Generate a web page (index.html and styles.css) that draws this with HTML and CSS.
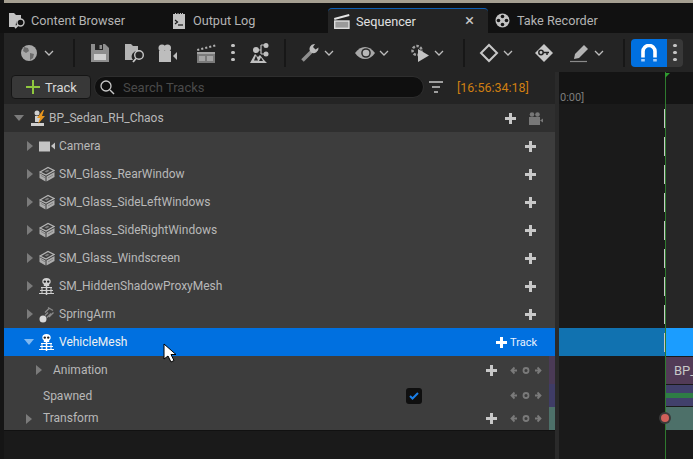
FILE: index.html
```html
<!DOCTYPE html>
<html lang="en">
<head>
	<meta charset="UTF-8">
	<title>Sequencer</title>
	<link rel="stylesheet" href="styles.css">
</head>
<body>
	<svg class="defs" width="0" height="0">
		<symbol id="chev" viewBox="0 0 10 6"><path d="M1 1l4 4 4-4" fill="none" stroke="#bdbdbd" stroke-width="1.3"/></symbol>
		<symbol id="plus" viewBox="0 0 11 11"><path d="M4 0h3v4h4v3H7v4H4V7H0V4h4z" fill="currentColor"/></symbol>
		<symbol id="cube" viewBox="0 0 16 16"><path d="M1 6L9 1.500 15 4.500 7 9z" fill="none" stroke="#b4b4b4" stroke-width="1.300"/><path d="M5.500 5.500l3-1.700 2 1-3 1.700z" fill="#7c7c7c"/><path d="M.500 7l6 3.500v5l-6-3.500zM7.500 10.500l8-4.500v5l-8 4.500z" fill="#adadad"/><path d="M2 9.500l4 2.300M9 12l5-3" stroke="#777" stroke-width=".8"/></symbol>
		<symbol id="skel" viewBox="0 0 15 17"><path d="M7.500 0c2.800 0 4.200 1.500 4.200 3.500 0 1.300-.6 2.200-1.500 2.700V8H4.800V6.200C3.900 5.700 3.300 4.800 3.300 3.500 3.300 1.500 4.700 0 7.500 0z" fill="currentColor"/><circle cx="5.800" cy="3.600" r="1.200" fill="#222"/><circle cx="9.200" cy="3.600" r="1.200" fill="#222"/><path d="M2 9.500h11M1 12.500h13M0 15.500h15" stroke="currentColor" stroke-width="1" fill="none"/><path d="M3 9v7M12 9v7" stroke="currentColor" stroke-width="1" fill="none"/><path d="M7.500 8v9" stroke="currentColor" stroke-width="1.500" fill="none"/></symbol>
		<symbol id="keys" viewBox="0 0 32 9"><g fill="none" stroke="#7a7a7a" stroke-width="1.800"><path d="M7 4.500H2M4.500 1.500l-3 3 3 3"/><circle cx="16" cy="4.500" r="2.500"/><path d="M25 4.500h5M27.500 1.500l3 3-3 3"/></g></symbol>
	</svg>

	<div class="strip"></div>

	<div class="tabs">
		<div class="tab tab-content">
			<svg class="tab-icon" width="18" height="18" viewBox="0 0 18 18"><path d="M0 1h5l2 2h5v4a6 6 0 0 0-5 8H0z" fill="#c2c2c2"/><circle cx="11.500" cy="10.500" r="3.500" fill="none" stroke="#c2c2c2" stroke-width="1.400"/><path d="M9 13l-3 3" stroke="#c2c2c2" stroke-width="1.800"/></svg>
			<span>Content Browser</span>
		</div>
		<div class="tab tab-log">
			<svg class="tab-icon" width="12" height="16" viewBox="0 0 12 16"><path d="M0 1h2V0h1v1h1.500V0h1v1H7V0h1v1h1V0h1v1h2v15H0z" fill="#c2c2c2"/><path d="M2 7l2.500 2L2 11" fill="none" stroke="#151515" stroke-width="1.200"/><path d="M5 12h5" stroke="#151515" stroke-width="1.200"/></svg>
			<span>Output Log</span>
		</div>
		<div class="tab tab-active">
			<svg class="tab-icon" width="16" height="16" viewBox="0 0 16 16"><path d="M0 5l15-4 .5 2L.5 7z" fill="#e4e4e4"/><rect x=".700" y="8" width="14.300" height="7.300" fill="#9a9a9a" stroke="#e4e4e4" stroke-width="1.300"/></svg>
			<span>Sequencer</span>
			<span class="tab-close">×</span>
		</div>
		<div class="tab tab-take">
			<svg class="tab-icon" width="16" height="16" viewBox="0 0 16 16"><circle cx="7.500" cy="7.500" r="7" fill="#c2c2c2"/><g fill="#151515"><circle cx="7.500" cy="3.500" r="1.800"/><circle cx="7.500" cy="11.500" r="1.800"/><circle cx="3.500" cy="7.500" r="1.800"/><circle cx="11.500" cy="7.500" r="1.800"/></g></svg>
			<span>Take Recorder</span>
		</div>
	</div>

	<div class="toolbar">
		<svg class="ml-21" width="16" height="16" viewBox="0 0 16 16"><circle cx="8" cy="8" r="8" fill="#a8a8a8"/><path d="M3 2l4 1 1 3-3 2-3-2zM9 8l4 1-1 4-3 2z" fill="#6c6c6c"/></svg>
		<svg class="ml-7" width="10" height="6"><use href="#chev"/></svg>
		<div class="sep ml-19"></div>
		<svg class="ml-16" width="18" height="18" viewBox="0 0 18 18"><path d="M0 0h14l4 4v14H0z" fill="#8e8e8e"/><path d="M4 0h8v6H4z" fill="#242424"/><path d="M8.500 1h2.500v4H8.500z" fill="#8e8e8e"/><path d="M3 10h12v6H3z" fill="#d0d0d0"/></svg>
		<svg class="ml-16" width="20" height="20" viewBox="0 0 20 20"><path d="M0 1h6l2 2h5v5a5.500 5.500 0 0 0-5 9H0z" fill="#b4b4b4"/><circle cx="14" cy="12" r="4.300" fill="none" stroke="#c8c8c8" stroke-width="1.400"/><path d="M11 15.500L8 19" stroke="#c8c8c8" stroke-width="1.800"/></svg>
		<svg class="ml-13" width="20" height="18" viewBox="0 0 20 18"><circle cx="4" cy="4" r="3.500" fill="#bdbdbd"/><circle cx="9.500" cy="4" r="3.500" fill="#bdbdbd"/><path d="M1 7h12v11H1z" fill="#bdbdbd"/><path d="M19 8v8l-4-4z" fill="#bdbdbd"/></svg>
		<svg class="ml-18" width="20" height="20" viewBox="0 0 20 20"><path d="M1 6l2-.5.5 2-2 .5zM5 5l2-.5.5 2-2 .5zM9 4l2-.5.5 2-2 .5zM13 3l2-.5.5 2-2 .5zM17 2l2-.5.5 2-2 .5z" fill="#b0b0b0"/><path d="M1 9h18v11H1z" fill="#7a7a7a"/><path d="M1 9h18v2H1zM3 13h6v5H3zM11 13h6v5h-6z" fill="#a4a4a4"/></svg>
		<div class="dots ml-15"><i></i><i></i><i></i></div>
		<svg class="ml-15" width="20" height="20" viewBox="0 0 20 20"><path d="M0 20l5-9 3 3 2-2 4 5 3 3z" fill="#c0c0c0"/><path d="M6 12.500l-2 5h4zM11 14.500l-2 3.500h4z" fill="#242424"/><circle cx="6" cy="7" r="3" fill="#c0c0c0"/><path d="M6 7h5M11 2v9M11 2h3M11 11h3" stroke="#c0c0c0" stroke-width="1.200" fill="none"/><circle cx="16" cy="2.500" r="2.500" fill="#c0c0c0"/><circle cx="16" cy="11" r="2.500" fill="#c0c0c0"/></svg>
		<div class="sep ml-14"></div>
		<svg class="ml-14" width="20" height="20" viewBox="0 0 20 20"><path d="M2.500 17.500L12 8" stroke="#8e8e8e" stroke-width="3.500"/><path d="M11 9.500a5 5 0 0 1 4-8.500l-2 3 2.500 2.500 3-2a5 5 0 0 1-7.500 5z" fill="#bcbcbc"/></svg>
		<svg class="ml-4" width="10" height="6"><use href="#chev"/></svg>
		<svg class="ml-21" width="20" height="14" viewBox="0 0 20 14"><path d="M0 7c3-4 6-6 10-6s7 2 10 6c-3 4-6 6-10 6S3 11 0 7z" fill="#a8a8a8"/><circle cx="11" cy="7" r="4.800" fill="#2a2a2a"/><circle cx="11" cy="7" r="3.300" fill="#b8b8b8"/></svg>
		<svg class="ml-4" width="10" height="6"><use href="#chev"/></svg>
		<svg class="ml-21" width="20" height="18" viewBox="0 0 20 18"><circle cx="7" cy="6.500" r="4.500" fill="none" stroke="#a0a0a0" stroke-width="2.500" stroke-dasharray="2.500 1.500"/><path d="M8 5v13l11-6.500z" fill="#c4c4c4"/></svg>
		<svg class="ml-4" width="10" height="6"><use href="#chev"/></svg>
		<div class="sep ml-19"></div>
		<svg class="ml-14" width="20" height="20" viewBox="0 0 20 20"><path d="M10 2l8 8-8 8-8-8z" fill="none" stroke="#c8c8c8" stroke-width="2"/></svg>
		<svg class="ml-4" width="10" height="6"><use href="#chev"/></svg>
		<svg class="ml-21" width="20" height="20" viewBox="0 0 20 20"><path d="M10 1l9 9-9 9-9-9z" fill="#c8c8c8"/><circle cx="7" cy="9.500" r="2.200" fill="none" stroke="#242424" stroke-width="1.500"/><path d="M9 9.500h6M13 9.500v2.500" stroke="#242424" stroke-width="1.500"/></svg>
		<svg class="ml-16" width="20" height="20" viewBox="0 0 20 20"><path d="M5 11L14 2l4 4-9 9-5 1z" fill="#b4b4b4"/><path d="M0 18.500h17" stroke="#8a8a8a" stroke-width="1.200"/></svg>
		<svg class="ml-4" width="10" height="6"><use href="#chev"/></svg>
		<div class="sep ml-19"></div>
		<div class="snap ml-6">
			<div class="snap-main">
				<svg width="16" height="18" viewBox="0 0 16 18"><path d="M2 12V7.500a6 6 0 0 1 12 0V12" fill="none" stroke="#fff" stroke-width="3.600"/><path d="M.200 12h3.600v1.500H.200zM12.200 12h3.600v1.500h-3.600z" fill="#fff"/><path d="M.200 15h3.600v2.500H.200zM12.200 15h3.600v2.500h-3.600z" fill="#a9d0fa"/></svg>
			</div>
			<div class="snap-more"><div class="dots"><i></i><i></i><i></i></div></div>
		</div>
	</div>

	<div class="main">
		<div class="left">
			<div class="trackbar">
				<div class="add-track">
					<svg width="14" height="14" viewBox="0 0 14 14"><path d="M6 0h2v6h6v2H8v6H6V8H0V6h6z" fill="#8fc73e"/></svg>
					<span>Track</span>
				</div>
				<div class="search">
					<svg width="15" height="15" viewBox="0 0 15 15"><circle cx="6" cy="6" r="5" fill="none" stroke="#c8c8c8" stroke-width="1.300"/><path d="M10 10l4 4" stroke="#c8c8c8" stroke-width="1.500"/></svg>
					<span>Search Tracks</span>
				</div>
				<svg class="filter" width="14" height="12" viewBox="0 0 14 12"><path d="M0 1h14M3 6h8M5 11h4" stroke="#c8c8c8" stroke-width="1.700"/></svg>
				<span class="timecode">[16:56:34:18]</span>
			</div>

			<div class="tree">
				<div class="row row-root">
					<i class="arrow-down"></i>
					<svg class="root-icon" width="15" height="17" viewBox="0 0 15 17"><circle cx="6" cy="3" r="2.500" fill="#cfcfcf"/><path d="M4 6h5v6H4z" fill="#cfcfcf"/><path d="M0 13h13v3H0z" fill="#cfcfcf"/><path d="M12 0L6 8h3l-2 6 7-8h-3l2-6z" fill="#e8961e"/></svg>
					<span class="label">BP_Sedan_RH_Chaos</span>
					<svg class="act-root" width="11" height="11"><use href="#plus"/></svg>
					<svg class="act-cam" width="14" height="13" viewBox="0 0 14 13"><circle cx="3" cy="2.500" r="2.300" fill="#777"/><circle cx="8.500" cy="2.500" r="2.300" fill="#777"/><path d="M0 5h11v8H0z" fill="#777"/><path d="M14 6.500v4l-3-2z" fill="#777"/></svg>
				</div>
				<div class="row">
					<i class="arrow"></i>
					<svg class="icon" width="16" height="12" viewBox="0 0 16 12"><path d="M0 1.500h11v10H0z" fill="#c4c4c4"/><path d="M16 2.500v7l-4-3.500z" fill="#c4c4c4"/></svg>
					<span class="label">Camera</span>
					<svg class="act" width="11" height="11"><use href="#plus"/></svg>
				</div>
				<div class="row">
					<i class="arrow"></i>
					<svg class="icon" width="16" height="16"><use href="#cube"/></svg>
					<span class="label">SM_Glass_RearWindow</span>
					<svg class="act" width="11" height="11"><use href="#plus"/></svg>
				</div>
				<div class="row">
					<i class="arrow"></i>
					<svg class="icon" width="16" height="16"><use href="#cube"/></svg>
					<span class="label">SM_Glass_SideLeftWindows</span>
					<svg class="act" width="11" height="11"><use href="#plus"/></svg>
				</div>
				<div class="row">
					<i class="arrow"></i>
					<svg class="icon" width="16" height="16"><use href="#cube"/></svg>
					<span class="label">SM_Glass_SideRightWindows</span>
					<svg class="act" width="11" height="11"><use href="#plus"/></svg>
				</div>
				<div class="row">
					<i class="arrow"></i>
					<svg class="icon" width="16" height="16"><use href="#cube"/></svg>
					<span class="label">SM_Glass_Windscreen</span>
					<svg class="act" width="11" height="11"><use href="#plus"/></svg>
				</div>
				<div class="row">
					<i class="arrow"></i>
					<svg class="icon skel" width="15" height="17"><use href="#skel"/></svg>
					<span class="label">SM_HiddenShadowProxyMesh</span>
					<svg class="act" width="11" height="11"><use href="#plus"/></svg>
				</div>
				<div class="row">
					<i class="arrow"></i>
					<svg class="icon" width="16" height="17" viewBox="0 0 16 17"><circle cx="4" cy="13" r="3.500" fill="#d8d8d8"/><path d="M6 9.500l3-3M8 11.500l4-4M6 6.500l4-4M10 11l4.500-4.500M9 1.500l5 3" stroke="#8a8a8a" stroke-width="1.300" fill="none"/></svg>
					<span class="label">SpringArm</span>
					<svg class="act" width="11" height="11"><use href="#plus"/></svg>
				</div>
				<div class="row row-sel">
					<i class="arrow-down"></i>
					<svg class="icon skel" width="15" height="17"><use href="#skel"/></svg>
					<span class="label">VehicleMesh</span>
					<div class="sel-track">
						<svg width="11" height="11"><use href="#plus"/></svg>
						<span>Track</span>
					</div>
				</div>
				<div class="row row-sub row-anim">
					<i class="arrow"></i>
					<span class="label">Animation</span>
					<svg class="act-sub" width="11" height="11"><use href="#plus"/></svg>
					<svg class="keys" width="32" height="9"><use href="#keys"/></svg>
				</div>
				<div class="row row-sub row-spawn">
					<span class="label">Spawned</span>
					<div class="check"><svg width="10" height="8" viewBox="0 0 10 8"><path d="M1 4l2.500 2.500L9 1" fill="none" stroke="#1a7fe8" stroke-width="2"/></svg></div>
					<svg class="keys" width="32" height="9"><use href="#keys"/></svg>
				</div>
				<div class="row row-sub row-trans">
					<i class="arrow"></i>
					<span class="label">Transform</span>
					<svg class="act-sub" width="11" height="11"><use href="#plus"/></svg>
					<svg class="keys" width="32" height="9"><use href="#keys"/></svg>
				</div>
			</div>
		</div>

		<div class="timeline">
			<div class="ruler"><span>0:00]</span></div>
			<div class="tl-row tl-tick"><div></div><div></div></div>
			<div class="tl-row tl-tick"><div></div><div></div></div>
			<div class="tl-row tl-tick"><div></div><div></div></div>
			<div class="tl-row tl-tick"><div></div><div></div></div>
			<div class="tl-row tl-tick"><div></div><div></div></div>
			<div class="tl-row tl-tick"><div></div><div></div></div>
			<div class="tl-row tl-tick"><div></div><div></div></div>
			<div class="tl-row tl-tick"><div></div><div></div></div>
			<div class="tl-row tl-sel tl-tick"><div></div><div></div></div>
			<div class="tl-row"><div></div><div class="clip-anim">BP_</div></div>
			<div class="tl-row tl-spawn"><div></div><div class="clip-spawn"><i></i></div></div>
			<div class="tl-row tl-trans"><div></div><div class="clip-trans"></div></div>
			<div class="playhead"></div>
			<div class="flag"></div>
			<div class="keyframe"></div>
		</div>
	</div>

	<!-- mouse pointer -->
	<svg class="cursor" width="15" height="21" viewBox="0 0 15 21"><path d="M1 1v15l4-3 3 6 3-1.500-3-6h5z" fill="#fff" stroke="#000" stroke-width="1"/></svg>
</body>
</html>
```

FILE: styles.css
```css
*{
	margin: 0;
	padding: 0;
	box-sizing: border-box;
}
html,body{
	width: 693px;
	height: 459px;
	overflow: hidden;
	background-color: #151515;
	font-family: Roboto, "Liberation Sans", sans-serif;
}
body{
	position: relative;
	display: flex;
	flex-direction: column;
}
.defs{
	position: absolute;
}
svg{
	flex: none;
	display: block;
}
.strip{
	height: 3px;
	background-color: #a59f91;
	margin-left: 4px;
}
.tabs{
	height: 30px;
	display: flex;
	align-items: flex-end;
	padding-left: 4px;
	background-color: #111;
	color: #b4b4b4;
	font-size: 12.700px;
}
.tab{
	height: 25px;
	display: flex;
	align-items: center;
	position: relative;
}
.tab-content{
	width: 159px;
	padding-left: 5px;
	gap: 4px;
}
.tab-log{
	width: 165px;
	padding-left: 10px;
	gap: 8px;
}
.tab-active{
	width: 160px;
	padding-left: 6px;
	gap: 6px;
	background-color: #242424;
	border-top: 1px solid #0d5fb5;
	border-radius: 4px 4px 0 0;
	color: #e0e0e0;
}
.tab-close{
	position: absolute;
	left: 137px;
	top: 3px;
	font-size: 17px;
	line-height: 17px;
	color: #c8c8c8;
}
.tab-take{
	padding-left: 7px;
	gap: 6px;
}
.toolbar{
	height: 39px;
	display: flex;
	align-items: center;
	background-color: #242424;
	border-left: 4px solid #151515;
}
.toolbar > :first-child{
	margin-left: 17px;
}
.ml-4{ margin-left: 4px; }
.ml-6{ margin-left: 6px; }
.ml-7{ margin-left: 7px; }
.ml-13{ margin-left: 13px; }
.ml-14{ margin-left: 14px; }
.ml-15{ margin-left: 15px; }
.ml-16{ margin-left: 16px; }
.ml-18{ margin-left: 18px; }
.ml-19{ margin-left: 19px; }
.ml-21{ margin-left: 21px; }
.sep{
	width: 2px;
	height: 28px;
	background-color: #171717;
}
.dots{
	width: 4px;
	display: flex;
	flex-direction: column;
	align-items: center;
	gap: 3.500px;
}
.dots i{
	display: block;
	width: 3.500px;
	height: 3.500px;
	border-radius: 2px;
	background-color: #c4c4c4;
}
.snap{
	display: flex;
	height: 28px;
	border-radius: 4px;
	overflow: hidden;
}
.snap-main{
	width: 36px;
	background-color: #0070e0;
	display: flex;
	align-items: center;
	justify-content: center;
}
.snap-more{
	width: 16px;
	background-color: #383838;
	display: flex;
	align-items: center;
	justify-content: center;
}
.main{
	flex: 1;
	display: flex;
	min-height: 0;
}
.left{
	flex: none;
	width: 559px;
	border-left: 4px solid #151515;
	border-right: 4px solid #2a2a2a;
	background-color: #1a1a1a;
}
.trackbar{
	height: 32px;
	display: flex;
	align-items: center;
	background-color: #242424;
	padding: 0 0 2px 7px;
	font-size: 13px;
}
.add-track{
	width: 80px;
	height: 24px;
	display: flex;
	align-items: center;
	gap: 5px;
	padding-left: 14px;
	background-color: #383838;
	border: 1px solid #151515;
	border-radius: 4px;
	color: #d8d8d8;
}
.search{
	width: 330px;
	height: 22px;
	margin-left: 3px;
	display: flex;
	align-items: center;
	gap: 8px;
	padding-left: 5px;
	background-color: #0f0f0f;
	border: 1px solid #2e2e2e;
	border-radius: 11px;
	color: #4a4a4a;
}
.filter{
	margin-left: 5px;
}
.timecode{
	margin-left: 14px;
	color: #d07f12;
	font-size: 12.500px;
}
.tree{
	background-color: #3d3d3d;
	color: #b8b8b8;
	font-size: 12px;
	border-bottom: 1px solid #111;
}
.row{
	height: 28px;
	display: flex;
	align-items: center;
	padding-left: 23px;
	position: relative;
}
.row-root{
	padding-left: 10px;
	background-color: #2f2f2f;
}
.row-sub{
	padding-left: 0;
}
.arrow{
	display: block;
	width: 0;
	height: 0;
	border-top: 5px solid transparent;
	border-bottom: 5px solid transparent;
	border-left: 6px solid #7b7b7b;
}
.arrow-down{
	display: block;
	width: 0;
	height: 0;
	border-left: 5px solid transparent;
	border-right: 5px solid transparent;
	border-top: 6px solid #7b7b7b;
}
.root-icon{
	margin-left: 7px;
}
.icon{
	margin-left: 6px;
	margin-right: 4px;
	color: #d0d0d0;
}
.skel{
	margin-left: 6px;
	margin-right: 5px;
}
.label{
	white-space: nowrap;
}
.row-root .label{
	margin-left: 3px;
}
.act{
	position: absolute;
	left: 521px;
	color: #c8c8c8;
}
.act-root{
	position: absolute;
	left: 501px;
	color: #c8c8c8;
}
.act-cam{
	position: absolute;
	left: 525px;
}
.row-sel{
	background-color: #0070e0;
	color: #f0f0f0;
}
.row-sel .icon{
	color: #fff;
}
.row-sel .arrow-down{
	border-top-color: #7fb8f0;
	margin-left: -3px;
	margin-right: -1px;
}
.sel-track{
	position: absolute;
	left: 492px;
	display: flex;
	align-items: center;
	gap: 3px;
	font-size: 11px;
	color: #e8f2ff;
}
.sel-track svg{
	color: #fff;
}
.row-sub::after{
	content: "";
	position: absolute;
	right: 0;
	top: 0;
	bottom: 0;
	width: 6px;
}
.row-anim::after{ background-color: #4a3a56; }
.row-spawn::after{ background-color: #3f3c66; }
.row-trans::after{ background-color: #4d7069; }
.row-spawn,
.row-trans{
	height: 23px;
}
.row-anim{
	padding-left: 32px;
}
.row-anim .label{
	margin-left: 11px;
}
.row-spawn{
	padding-left: 39px;
}
.row-trans{
	padding-left: 22px;
}
.row-trans .label{
	margin-left: 11px;
	padding-bottom: 2px;
}
.act-sub{
	position: absolute;
	left: 482px;
	color: #c8c8c8;
}
.keys{
	position: absolute;
	left: 506px;
}
.check{
	position: absolute;
	left: 402px;
	width: 16px;
	height: 16px;
	display: flex;
	align-items: center;
	justify-content: center;
	background-color: #0f0f0f;
	border-radius: 3px;
}
.timeline{
	flex: 1;
	min-width: 0;
	overflow: hidden;
	position: relative;
	background-color: #1a1a1a;
}
.ruler{
	height: 32px;
	background-color: #141414;
	color: #7d7d7d;
	font-size: 11px;
	padding: 19px 0 0 1px;
}
.tl-row{
	height: 28px;
	display: flex;
}
.tl-row > :first-child{
	flex: none;
	width: 106px;
	position: relative;
}
.tl-row > :last-child{
	flex: 1;
	min-width: 0;
	background-color: #262626;
}
.tl-tick > :first-child::after{
	content: "";
	position: absolute;
	right: 0;
	top: 5px;
	width: 1px;
	height: 19px;
	background-color: #c8c8c8;
}
.tl-sel{
	background-color: #1172b0;
}
.tl-sel > :last-child{
	background-color: #1b9dff;
}
.tl-spawn,
.tl-trans{
	height: 23px;
}
.tl-row .clip-anim{
	background-color: #523b57;
	border-top: 1px solid #1a1a1a;
	color: #c8c8c8;
	font-size: 13px;
	line-height: 27px;
	padding-left: 9px;
	overflow: hidden;
}
.tl-row .clip-spawn{
	margin-top: 1px;
	background-color: #41406b;
	height: 21px;
	padding-top: 8px;
}
.clip-spawn i{
	display: block;
	height: 5px;
	background-color: #2e7d45;
}
.tl-row .clip-trans{
	background-color: #4d7069;
}
.playhead{
	position: absolute;
	left: 106px;
	top: 0;
	bottom: 0;
	width: 1px;
	background-color: #2f7a2f;
}
.flag{
	position: absolute;
	left: 106px;
	top: 1px;
	border-top: 5px solid #2f9a2f;
	border-right: 5px solid transparent;
}
.keyframe{
	position: absolute;
	left: 102px;
	top: 342px;
	width: 8px;
	height: 8px;
	border-radius: 50%;
	background-color: #d0605a;
	box-shadow: 0 0 0 2px #3a3a3a;
}
.cursor{
	position: absolute;
	left: 163px;
	top: 343px;
}
```
